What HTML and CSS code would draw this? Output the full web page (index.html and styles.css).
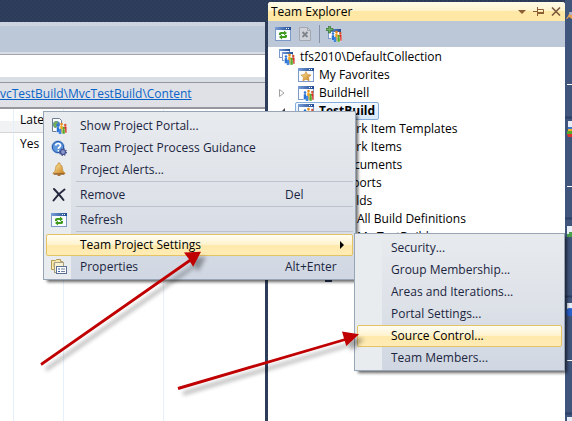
FILE: index.html
```html
<!DOCTYPE html>
<html lang="en">
<head>
<meta charset="utf-8">
<title>Team Explorer</title>
<link rel="stylesheet" href="styles.css">
</head>
<body>
<svg class="defs" aria-hidden="true">
  <defs>
    <linearGradient id="bar" x1="0" x2="1" y1="0" y2="0"><stop offset="0" stop-color="#7aa0d8"/><stop offset="1" stop-color="#1f4a94"/></linearGradient>
    <linearGradient id="gold" x1="0" x2="1" y1="0" y2="1"><stop offset="0" stop-color="#fff0a8"/><stop offset="1" stop-color="#c77a16"/></linearGradient>
    <g id="people">
      <path d="M5.500 10q0-1.500 1.500-1.500t1.500 1.500v4.500h-3z" fill="#2b73d2" stroke="#fff" stroke-width=".5"/><circle cx="7" cy="7.500" r="1.200" fill="#2b73d2"/>
      <path d="M9 8.500Q9 7 10.500 7T12 8.500V15H9z" fill="#f3a51e" stroke="#fff" stroke-width=".5"/><circle cx="10.500" cy="6" r="1.300" fill="#e58b1c"/>
      <path d="M12.800 9.500q0-1.500 1.500-1.500t1.500 1.500V15h-3z" fill="#d8342b" stroke="#fff" stroke-width=".4"/><circle cx="14.300" cy="7" r="1.200" fill="#d8542b"/>
      <path d="M7.800 12q0-1.300 1.300-1.300t1.300 1.300v4H7.800z" fill="#3f87e0"/><path d="M11.200 12q0-1.400 1.400-1.400T14 12v4h-2.800z" fill="#55a829" stroke="#fff" stroke-width=".4"/><circle cx="12.600" cy="9.900" r="1.100" fill="#55a829"/>
    </g>
    <g id="window"><rect x=".5" y="1.500" width="15" height="13" fill="#f8fbff" stroke="#7c99c7"/><path d="M0 1h16v3H0z" fill="url(#bar)"/><path d="M11 2h1v1h-1zM13 2h1v1h-1z" fill="#fff"/></g>
    <g id="project"><use href="#window"/><use href="#people"/></g>
    <g id="refresh"><use href="#window"/><path d="M4 9V7.500Q4 6 6 6h3V4.500L12 7 9 9.500V8H6v1zM12 9v1.500q0 1.500-2 1.500H7v1.500L4 11l3-2.500V10h3V9z" fill="#3f9b1b"/></g>
  </defs>
</svg>

<div class="shell">
  <main class="document">
    <div class="tab-band"></div>
    <div class="blank-band"></div>
    <nav class="path"><a href="#content">vcTestBuild\MvcTestBuild\Content</a></nav>
    <table class="files">
      <thead><tr><th></th><th>Latest</th><th></th><th></th></tr></thead>
      <tbody><tr><td></td><td>Yes</td><td></td><td></td></tr></tbody>
    </table>
  </main>

  <aside class="explorer">
    <header class="title">
      <h1>Team Explorer</h1>
      <button type="button" aria-label="Window position"><svg width="8" height="4"><path d="M0 0h8L4 4z" fill="#8b5e33"/></svg></button>
      <button type="button" aria-label="Auto hide"><svg width="11" height="9" fill="none" stroke="#8b5e33"><path d="M0 4.500h4M4.500 0v9M5 2.500h5.500v4M5 6.500h6M5 5.500h6"/></svg></button>
      <button type="button" aria-label="Close"><svg width="10" height="9" fill="none" stroke="#7b5a3b" stroke-width="1.600"><path d="M1 .5l8 8M9 .5l-8 8"/></svg></button>
    </header>
    <div class="toolbar">
      <button type="button" aria-label="Refresh"><svg width="16" height="16"><use href="#refresh"/></svg></button>
      <button type="button" aria-label="Stop"><svg width="16" height="16"><path d="M2.500 1.500h8l3 3v10h-11z" fill="#cfd3d9" stroke="#a2a7b0"/><path d="M10.500 1.500v3h3" fill="none" stroke="#a2a7b0"/><path d="M5.500 6l5 5M10.500 6l-5 5" stroke="#7e838c" stroke-width="1.800"/></svg></button>
      <i class="divider"></i>
      <button type="button" aria-label="Connect to team project"><svg width="16" height="16"><rect x="2.500" y="3.500" width="12" height="9" fill="#f8fbff" stroke="#7c99c7"/><path d="M2 3h13v3H2z" fill="url(#bar)"/><use href="#people"/><path d="M2.500 0h2v2.500H7v2H4.500V7h-2V4.500H0v-2h2.500z" fill="#6fae62" stroke="#35702f" stroke-width=".7"/></svg></button>
    </div>
    <ul class="tree">
      <li class="project"><svg width="16" height="16"><rect x=".5" y=".5" width="10" height="8" fill="#f8fbff" stroke="#7c99c7"/><path d="M0 0h11v2H0z" fill="url(#bar)"/><rect x="3.500" y="3.500" width="10" height="8" fill="#f8fbff" stroke="#7c99c7"/><path d="M3 3h11v2H3z" fill="url(#bar)"/><use href="#people"/></svg><span>tfs2010\DefaultCollection</span></li>
      <li class="project"><i class="twist"></i><svg width="16" height="16"><use href="#window"/><path d="M8 4.500l1.500 3 3.500.5-2.500 2.300.6 3.500L8 12.200 4.900 13.800l.6-3.500L3 8l3.500-.5z" fill="url(#gold)" stroke="#cb842b" stroke-width=".6"/></svg><span>My Favorites</span></li>
      <li class="project"><i class="twist"><svg width="6" height="8"><path d="M.5.5L5 4 .5 7.500z" fill="#fff" stroke="#a0a0a0"/></svg></i><svg width="16" height="16"><use href="#project"/></svg><span>BuildHell</span></li>
      <li class="project"><i class="twist"><svg width="6" height="6"><path d="M6 0v6H0z" fill="#404040"/></svg></i><b class="selected"><svg width="16" height="16"><use href="#project"/></svg><span>TestBuild</span></b></li>
      <li class="node">Work Item Templates</li>
      <li class="node">Work Items</li>
      <li class="node">Documents</li>
      <li class="node">Reports</li>
      <li class="node">Builds</li>
      <li class="leaf">All Build Definitions</li>
      <li class="leaf">My TestBuild</li>
      <li></li>
      <li class="control"><svg width="16" height="18"><path d="M5 16h7v2H5z" fill="#27365c"/></svg></li>
    </ul>
  </aside>

  <div class="strip" aria-hidden="true">
    <svg width="7" height="421">
      <path d="M0 117.500h7M0 218.500h7M0 296.500h7M0 413.500h7" stroke="#2c4064" stroke-width="2"/>
      <path d="M1 19l2-3 2-4 2 1v6l-3-2-2 2z" fill="#e8a04c"/><path d="M4 12h3v3H5z" fill="#a8b4c8"/>
      <path d="M2 84.500h5M2 186.500h5M2 360.500h5" stroke="#fff"/>
      <path d="M3 121h4v15H3z" fill="#e8eef8"/><path d="M3 127h4v3H3z" fill="#3979cf"/><path d="M2 131h5v3H2z" fill="#55a829"/><path d="M2 134h5v3H3z" fill="#d8342b"/><path d="M3 129h4v2H3z" fill="#efb32b"/>
      <path d="M2 226h5v10H2z" fill="#e8eef8"/><path d="M2 234h2v-2h3v5H2z" fill="#4ca04a"/>
      <path d="M2 303h5v12H2z" fill="#e8eef8"/><circle cx="5" cy="312" r="4" fill="#2761c9"/><path d="M2 417h5v4H2z" fill="#e8eef8"/>
    </svg>
  </div>
</div>

<div class="menu main-menu" role="menu">
  <button type="button" role="menuitem"><svg width="16" height="16"><path d="M1.500.5h7l2 2v11h-9z" fill="#fff" stroke="#6d7e98"/><circle cx="5.500" cy="6.500" r="3.500" fill="#4b7fc4"/><path d="M3 4l3-1 1 2-2 1 1 3-2 1-2-3z" fill="#75ae57"/><use href="#people"/></svg><span>Show Project Portal...</span></button>
  <button type="button" role="menuitem"><svg width="16" height="16"><circle cx="7" cy="7" r="6.300" fill="#5f97dd" stroke="#b4c8e4"/><circle cx="7" cy="7" r="5.600" fill="none" stroke="#2459ae"/><path d="M4.500 5.500Q5 3.500 7.200 3.500T9.500 5.500Q9.500 6.500 7.500 8v1M7.500 10v1.500" fill="none" stroke="#fff" stroke-width="1.700"/><circle cx="12" cy="12" r="2.500" fill="#8c98ca" stroke="#44508f" stroke-width="1.200"/><circle cx="12" cy="12" r="3.400" fill="none" stroke="#44508f" stroke-width="1.200" stroke-dasharray="1.300 1.370"/></svg><span>Team Project Process Guidance</span></button>
  <button type="button" role="menuitem"><svg width="16" height="16"><path d="M2 11q2.500-1 2.500-4.500 0-3.500 2.500-4V1h2v1.500q2.500.5 2.500 4Q11.500 10 14 11v1H2z" fill="url(#gold)" stroke="#c08a3c" stroke-width=".7"/><path d="M3 11.500h10v1H3z" fill="#70451e"/><path d="M6 12.500h4q-.5 1.500-2 1.500t-2-1.500z" fill="#a8641c"/></svg><span>Project Alerts...</span></button>
  <hr>
  <button type="button" role="menuitem"><svg width="16" height="16"><path d="M3 2q4 4 9.500 11M13.500 2.500Q7 7 2.500 13.500" fill="none" stroke="#252940" stroke-width="2" stroke-linecap="round"/></svg><span>Remove</span><kbd>Del</kbd></button>
  <hr>
  <button type="button" role="menuitem"><svg width="16" height="16"><use href="#refresh"/></svg><span>Refresh</span></button>
  <hr>
  <button type="button" role="menuitem" class="active" aria-haspopup="menu"><i class="no-icon"></i><span>Team Project Settings</span><svg class="more" width="4" height="8"><path d="M0 0l4 4-4 4z" fill="#000"/></svg></button>
  <button type="button" role="menuitem"><svg width="16" height="16"><path d="M.5 10.500v-9h4l1-1h4v2h2v8z" fill="#f7e9ae" stroke="#b39a56"/><path d="M2 5h8M2 7h8" stroke="#bba76d"/><rect x="3.500" y="3.500" width="9" height="10" fill="#f8f2d2" stroke="#a8a083"/><rect x="5.500" y="7.500" width="10" height="7" fill="#fff" stroke="#596f98"/><path d="M7 10h2M7 12.500h2" stroke="#3668b2" stroke-width="1.200"/><path d="M10 10h4M10 12.500h4" stroke="#72829d"/></svg><span>Properties</span><kbd>Alt+Enter</kbd></button>
</div>

<div class="menu sub-menu" role="menu">
  <button type="button" role="menuitem"><i class="no-icon"></i><span>Security...</span></button>
  <button type="button" role="menuitem"><i class="no-icon"></i><span>Group Membership...</span></button>
  <button type="button" role="menuitem"><i class="no-icon"></i><span>Areas and Iterations...</span></button>
  <button type="button" role="menuitem"><i class="no-icon"></i><span>Portal Settings...</span></button>
  <button type="button" role="menuitem" class="active"><i class="no-icon"></i><span>Source Control...</span></button>
  <button type="button" role="menuitem"><i class="no-icon"></i><span>Team Members...</span></button>
</div>

<svg class="arrows" width="572" height="421" aria-hidden="true">
  <g fill="#c00000">
    <path d="M40.300 363.200L189 259.300l-5-6.800 17-.8-7.800 15-3-4.800L41.700 365.800z"/>
    <path d="M177.600 387.100L344 338.400l-2-6.800 17 2.700-12.700 11.700-1.600-5.100L178.400 389.900z"/>
  </g>
</svg>
</body>
</html>
```
FILE: styles.css
```css
* { box-sizing: border-box; }

body {
  margin: 0;
  position: relative;
  min-height: 100vh;
  overflow: hidden;
  font: 12px/18px "Open Sans", "Noto Sans", sans-serif;
  color: #000;
}

.defs { position: absolute; width: 0; height: 0; }

button {
  font: inherit;
  color: inherit;
  background: none;
  border: 0;
  padding: 0;
}

svg { display: block; flex: none; }

.shell {
  display: grid;
  grid-template-columns: minmax(0, 1fr) 297px 7px;
  min-height: 100vh;
  background: #2b3c5a repeating-conic-gradient(#2f405d 0 25%, #2a3a58 0 50%) 0 0 / 4px 4px;
}

/* document pane */
.document {
  margin: 22px 3px 0 0;
  display: flex;
  flex-direction: column;
  background: #fff;
}

.tab-band {
  height: 33px;
  background: #bcc7d8;
  border-top: 4px solid #cdd4e0;
  border-bottom: 1px solid #a2a5ac;
  box-shadow: inset 0 -2px #d9dde5;
}

.blank-band { height: 22px; }

.path {
  height: 32px;
  padding-top: 8px;
  border-bottom: 2px solid #95979d;
  background: linear-gradient(#dadee5 5px, #96989f 5px, #96989f 6px, #dfe1e6 6px);
}

.path a { color: #0a64c8; display: block; white-space: nowrap; }

.files {
  flex: 1;
  display: flex;
  flex-direction: column;
}

.files thead, .files tbody { display: flex; }
.files tbody { flex: 1; }

.files tr {
  display: grid;
  flex: 1;
  grid-template-columns: 14px 50px 100px 1fr;
}

.files th, .files td {
  padding: 2px 0 0 6px;
  border-right: 1px solid #e6f0fa;
  text-align: left;
  font-weight: normal;
}

.files th {
  height: 24px;
  background: linear-gradient(#fff 12px, #f1f2f4 12px);
  border-bottom: 1px solid #d5d5d5;
}

.files th:last-child, .files td:last-child { border-right: 0; }

/* explorer pane */
.explorer {
  margin-top: 2px;
  background: #fff;
  border-radius: 3px 3px 0 0;
  overflow: hidden;
}

.title {
  display: flex;
  align-items: center;
  gap: 7px;
  height: 19px;
  padding: 0 4px 0 3px;
  background: linear-gradient(#fffbe9, #fff3cc 9px, #ffe8a6 9px);
}

.title h1 { flex: 1; margin: 0; font: inherit; }

.toolbar {
  display: flex;
  align-items: center;
  gap: 6px;
  height: 26px;
  padding: 0 7px;
  background: #bcc7d8;
}

.divider { width: 1px; height: 18px; background: #8592a8; }

.tree { list-style: none; margin: 0; padding: 1px 0 0; }
.tree li { display: flex; align-items: center; height: 18px; white-space: nowrap; }
.tree .project { padding-left: 11px; gap: 5px; }
.twist { width: 14px; }
.tree .node { padding-left: 70px; }
.tree .leaf { padding-left: 89px; }
.tree .control { padding-left: 52px; }

.selected {
  display: flex;
  gap: 5px;
  align-items: center;
  height: 18px;
  margin-left: -3px;
  padding: 0 3px 0 2px;
  border: 1px solid #84acdd;
  border-radius: 2px;
  background: linear-gradient(#f4f9ff, #d8e9fb);
}

.strip { background: #40557c; }

/* menus */
.menu {
  position: absolute;
  display: flex;
  flex-direction: column;
  padding: 3px 2px 1px;
  border: 1px solid #98a5b7;
  background:
    linear-gradient(#e9ecee, #e9ecee) 0 0 / 27px 100% no-repeat,
    linear-gradient(#e8ebee, #dfe3e9 45%, #d0d7e2);
  box-shadow: 3px 3px 3px -1px rgba(0, 0, 0, .6);
  color: #1b2541;
}

.main-menu { left: 43px; top: 111px; width: 313px; }
.sub-menu { left: 354px; top: 233px; width: 211px; }

.menu button {
  display: flex;
  align-items: center;
  gap: 13px;
  height: 22px;
  padding: 0 8px 0 4px;
  border: 1px solid transparent;
  border-radius: 2px;
  text-align: left;
  white-space: nowrap;
}

.menu button span { flex: 1; }
.menu kbd { width: 59px; font: inherit; }
.no-icon { width: 16px; }

.menu .active {
  color: #000;
  border-color: #e5c365;
  background: linear-gradient(#fffdf3, #fff3cc 50%, #ffe9ab 50%, #ffecb5);
}

.menu hr {
  width: 100%;
  height: 3px;
  margin: 0;
  border: 0;
  background: linear-gradient(#bcc3ce, #bcc3ce) 30px 0 / 100% 1px no-repeat;
}

.arrows {
  position: absolute;
  left: 0;
  top: 0;
  pointer-events: none;
  filter: drop-shadow(5px 5px 2px rgba(0, 0, 0, .35));
}
```
